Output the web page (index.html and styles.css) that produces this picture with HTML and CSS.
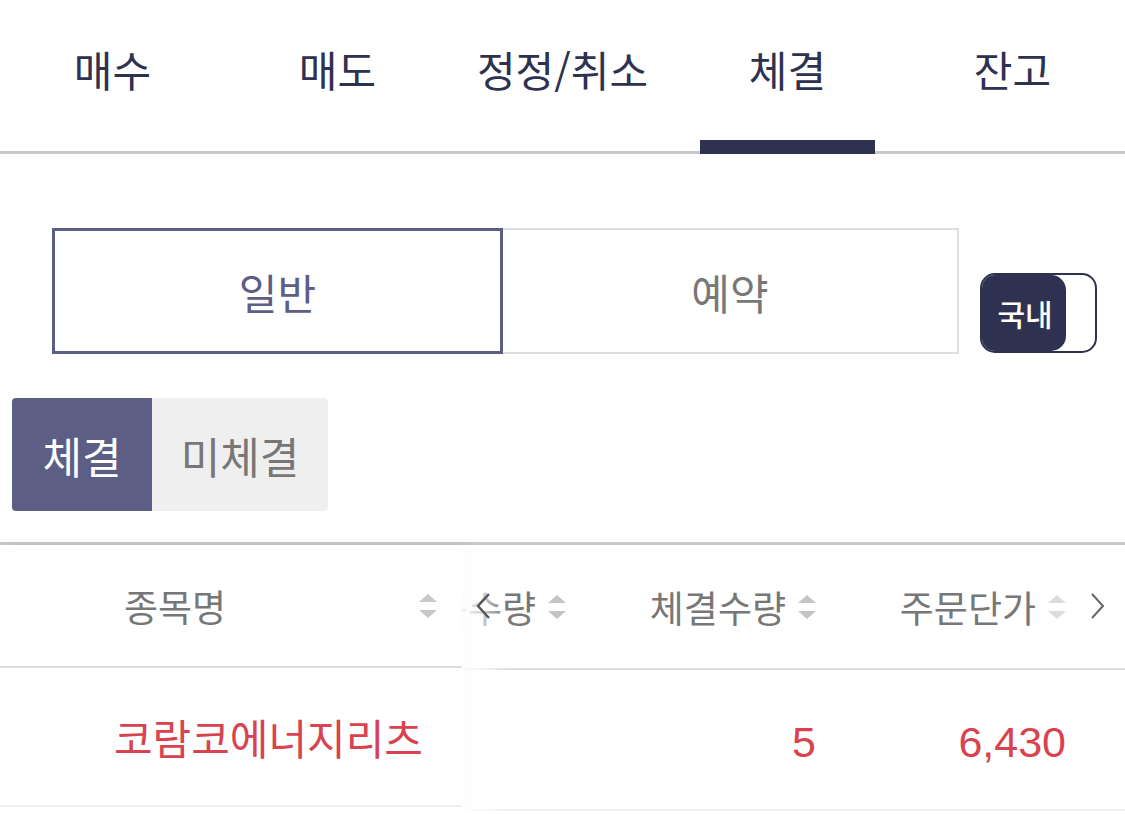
FILE: index.html
```html
<!DOCTYPE html>
<html lang="ko">
<head>
  <meta charset="UTF-8">
  <meta name="viewport" content="width=device-width, initial-scale=1">
  <title>체결 조회</title>
  <link rel="stylesheet" href="styles.css">
</head>
<body>

  <nav class="tabs">
    <a href="#" class="tab">매수</a>
    <a href="#" class="tab">매도</a>
    <a href="#" class="tab">정정/취소</a>
    <a href="#" class="tab active">체결</a>
    <a href="#" class="tab">잔고</a>
  </nav>

  <section class="order-type">
    <div class="segment">
      <button class="seg-btn selected">일반</button>
      <button class="seg-btn">예약</button>
    </div>
    <div class="market-toggle">
      <span class="knob">국내</span>
    </div>
  </section>

  <div class="subtabs">
    <button class="subtab on">체결</button>
    <button class="subtab">미체결</button>
  </div>

  <div class="table">
    <div class="fixed-col">
      <div class="th">
        <span class="th-label">종목명</span>
        <svg class="sort" viewBox="0 0 18 24"><polygon points="0,8 9,0 18,8" fill="#c8c8c8"/><polygon points="0,16 9,24 18,16" fill="#c8c8c8"/></svg>
      </div>
      <div class="td name">코람코에너지리츠</div>
    </div>

    <div class="scroll-col">
      <div class="track">
        <div class="row head">
          <div class="th">주문수량
            <svg class="sort" viewBox="0 0 18 24"><polygon points="0,8 9,0 18,8" fill="#c4c4c4"/><polygon points="0,16 9,24 18,16" fill="#c4c4c4"/></svg>
          </div>
          <div class="th">체결수량
            <svg class="sort" viewBox="0 0 18 24"><polygon points="0,8 9,0 18,8" fill="#c4c4c4"/><polygon points="0,16 9,24 18,16" fill="#c4c4c4"/></svg>
          </div>
          <div class="th">주문단가
            <svg class="sort" viewBox="0 0 18 24"><polygon points="0,8 9,0 18,8" fill="#dcdcdc"/><polygon points="0,16 9,24 18,16" fill="#dcdcdc"/></svg>
          </div>
        </div>
        <div class="row body">
          <div class="td num"></div>
          <div class="td num">5</div>
          <div class="td num">6,430</div>
        </div>
      </div>
    </div>

    <svg class="arrow arrow-left" viewBox="0 0 16 28"><polyline points="14,2 3,14 14,26" fill="none" stroke="#555" stroke-width="2.4"/></svg>
    <svg class="arrow arrow-right" viewBox="0 0 16 28"><polyline points="2,2 13,14 2,26" fill="none" stroke="#666" stroke-width="2"/></svg>
  </div>

</body>
</html>
```

FILE: styles.css
```css
/* ========== GLOBAL ========== */
* {
  box-sizing: border-box;
  margin: 0;
  padding: 0;
}

body {
  font-family: "Noto Sans CJK KR", sans-serif;
  background: #fff;
  color: #2e3150;
  width: 1125px;
  overflow: hidden;
}

button {
  font-family: inherit;
  border: none;
  background: none;
  cursor: pointer;
}

/* ========== TOP TABS ========== */
.tabs {
  display: grid;
  grid-template-columns: repeat(5, 1fr);
  height: 154px;
  border-bottom: 3px solid #c8c8c8;
}

.tab {
  position: relative;
  display: flex;
  justify-content: center;
  padding-top: 39px;
  font-size: 42px;
  line-height: 60px;
  color: #2e3150;
  text-decoration: none;
}

.tab.active::after {
  content: "";
  position: absolute;
  left: 25px;
  right: 25px;
  bottom: -3px;
  height: 14px;
  background: #2e3150;
}

/* ========== ORDER TYPE ========== */
.order-type {
  display: flex;
  align-items: flex-end;
  gap: 21px;
  margin: 74px 28px 0 52px;
}

.segment {
  display: flex;
  width: 907px;
  height: 126px;
}

.seg-btn {
  flex: 1;
  font-size: 42px;
  color: #777;
  border: 2px solid #dedede;
  border-left: none;
}

.seg-btn.selected {
  flex: 0 0 451px;
  color: #5c5e86;
  border: 3px solid #5c5e86;
}

.market-toggle {
  display: flex;
  width: 117px;
  height: 80px;
  margin-bottom: 1px;
  border: 2px solid #2e3150;
  border-radius: 15px;
  overflow: hidden;
}

.knob {
  display: flex;
  align-items: center;
  justify-content: center;
  width: 84px;
  padding-left: 2px;
  background: #2e3150;
  color: #fff;
  font-size: 30px;
  font-weight: 500;
  border-radius: 0 15px 15px 0;
}

/* ========== SUB TABS ========== */
.subtabs {
  display: flex;
  margin: 44px 0 0 12px;
}

.subtab {
  width: 176px;
  height: 113px;
  font-size: 43px;
  color: #777;
  background: #efefef;
  border-radius: 0 4px 4px 0;
}

.subtab.on {
  width: 140px;
  color: #fff;
  background: #5c5e86;
  border-radius: 4px 0 0 4px;
}

/* ========== TABLE ========== */
.table {
  position: relative;
  display: flex;
  margin-top: 31px;
  border-top: 3px solid #c8c8c8;
}

.th {
  display: flex;
  align-items: center;
  height: 123px;
  font-size: 37px;
  color: #777;
}

.td {
  display: flex;
  align-items: center;
  height: 139px;
  color: #d9434f;
}

.fixed-col .th,
.row.head {
  border-bottom: 2px solid #dedede;
}

.fixed-col .td,
.row.body {
  border-bottom: 2px solid #f0f0f0;
}

.sort {
  width: 18px;
  height: 24px;
  flex-shrink: 0;
}

.fixed-col {
  position: relative;
  z-index: 1;
  flex: 0 0 462px;
  background: #fff;
  box-shadow: 6px 0 12px rgba(0, 0, 0, 0.07);
}

.fixed-col .th {
  padding-right: 25px;
}

.th-label {
  flex: 1;
  text-align: center;
  padding-right: 69px;
}

.name {
  justify-content: flex-end;
  padding-right: 39px;
  font-size: 42px;
}

.scroll-col {
  position: relative;
  flex: 1;
  overflow: hidden;
}

/* fade where columns slide under the fixed column */
.scroll-col::before {
  content: "";
  position: absolute;
  top: 0;
  bottom: 0;
  left: 0;
  width: 44px;
  z-index: 1;
  background: linear-gradient(to right, rgba(255, 255, 255, 0.9) 0, rgba(255, 255, 255, 0.7) 18px, rgba(255, 255, 255, 0) 44px);
}

.track {
  margin-left: -146px;
}

.row {
  display: flex;
}

.row .th,
.row .td {
  flex: 0 0 250px;
  justify-content: flex-end;
  gap: 12px;
}

.num {
  font-family: "Liberation Sans", "Noto Sans CJK KR", sans-serif;
  font-size: 43px;
  padding-top: 6px;
}

.arrow {
  position: absolute;
  top: 47px;
  width: 16px;
  height: 28px;
  z-index: 2;
}

.arrow-left {
  left: 475px;
}

.arrow-right {
  left: 1090px;
}
```
